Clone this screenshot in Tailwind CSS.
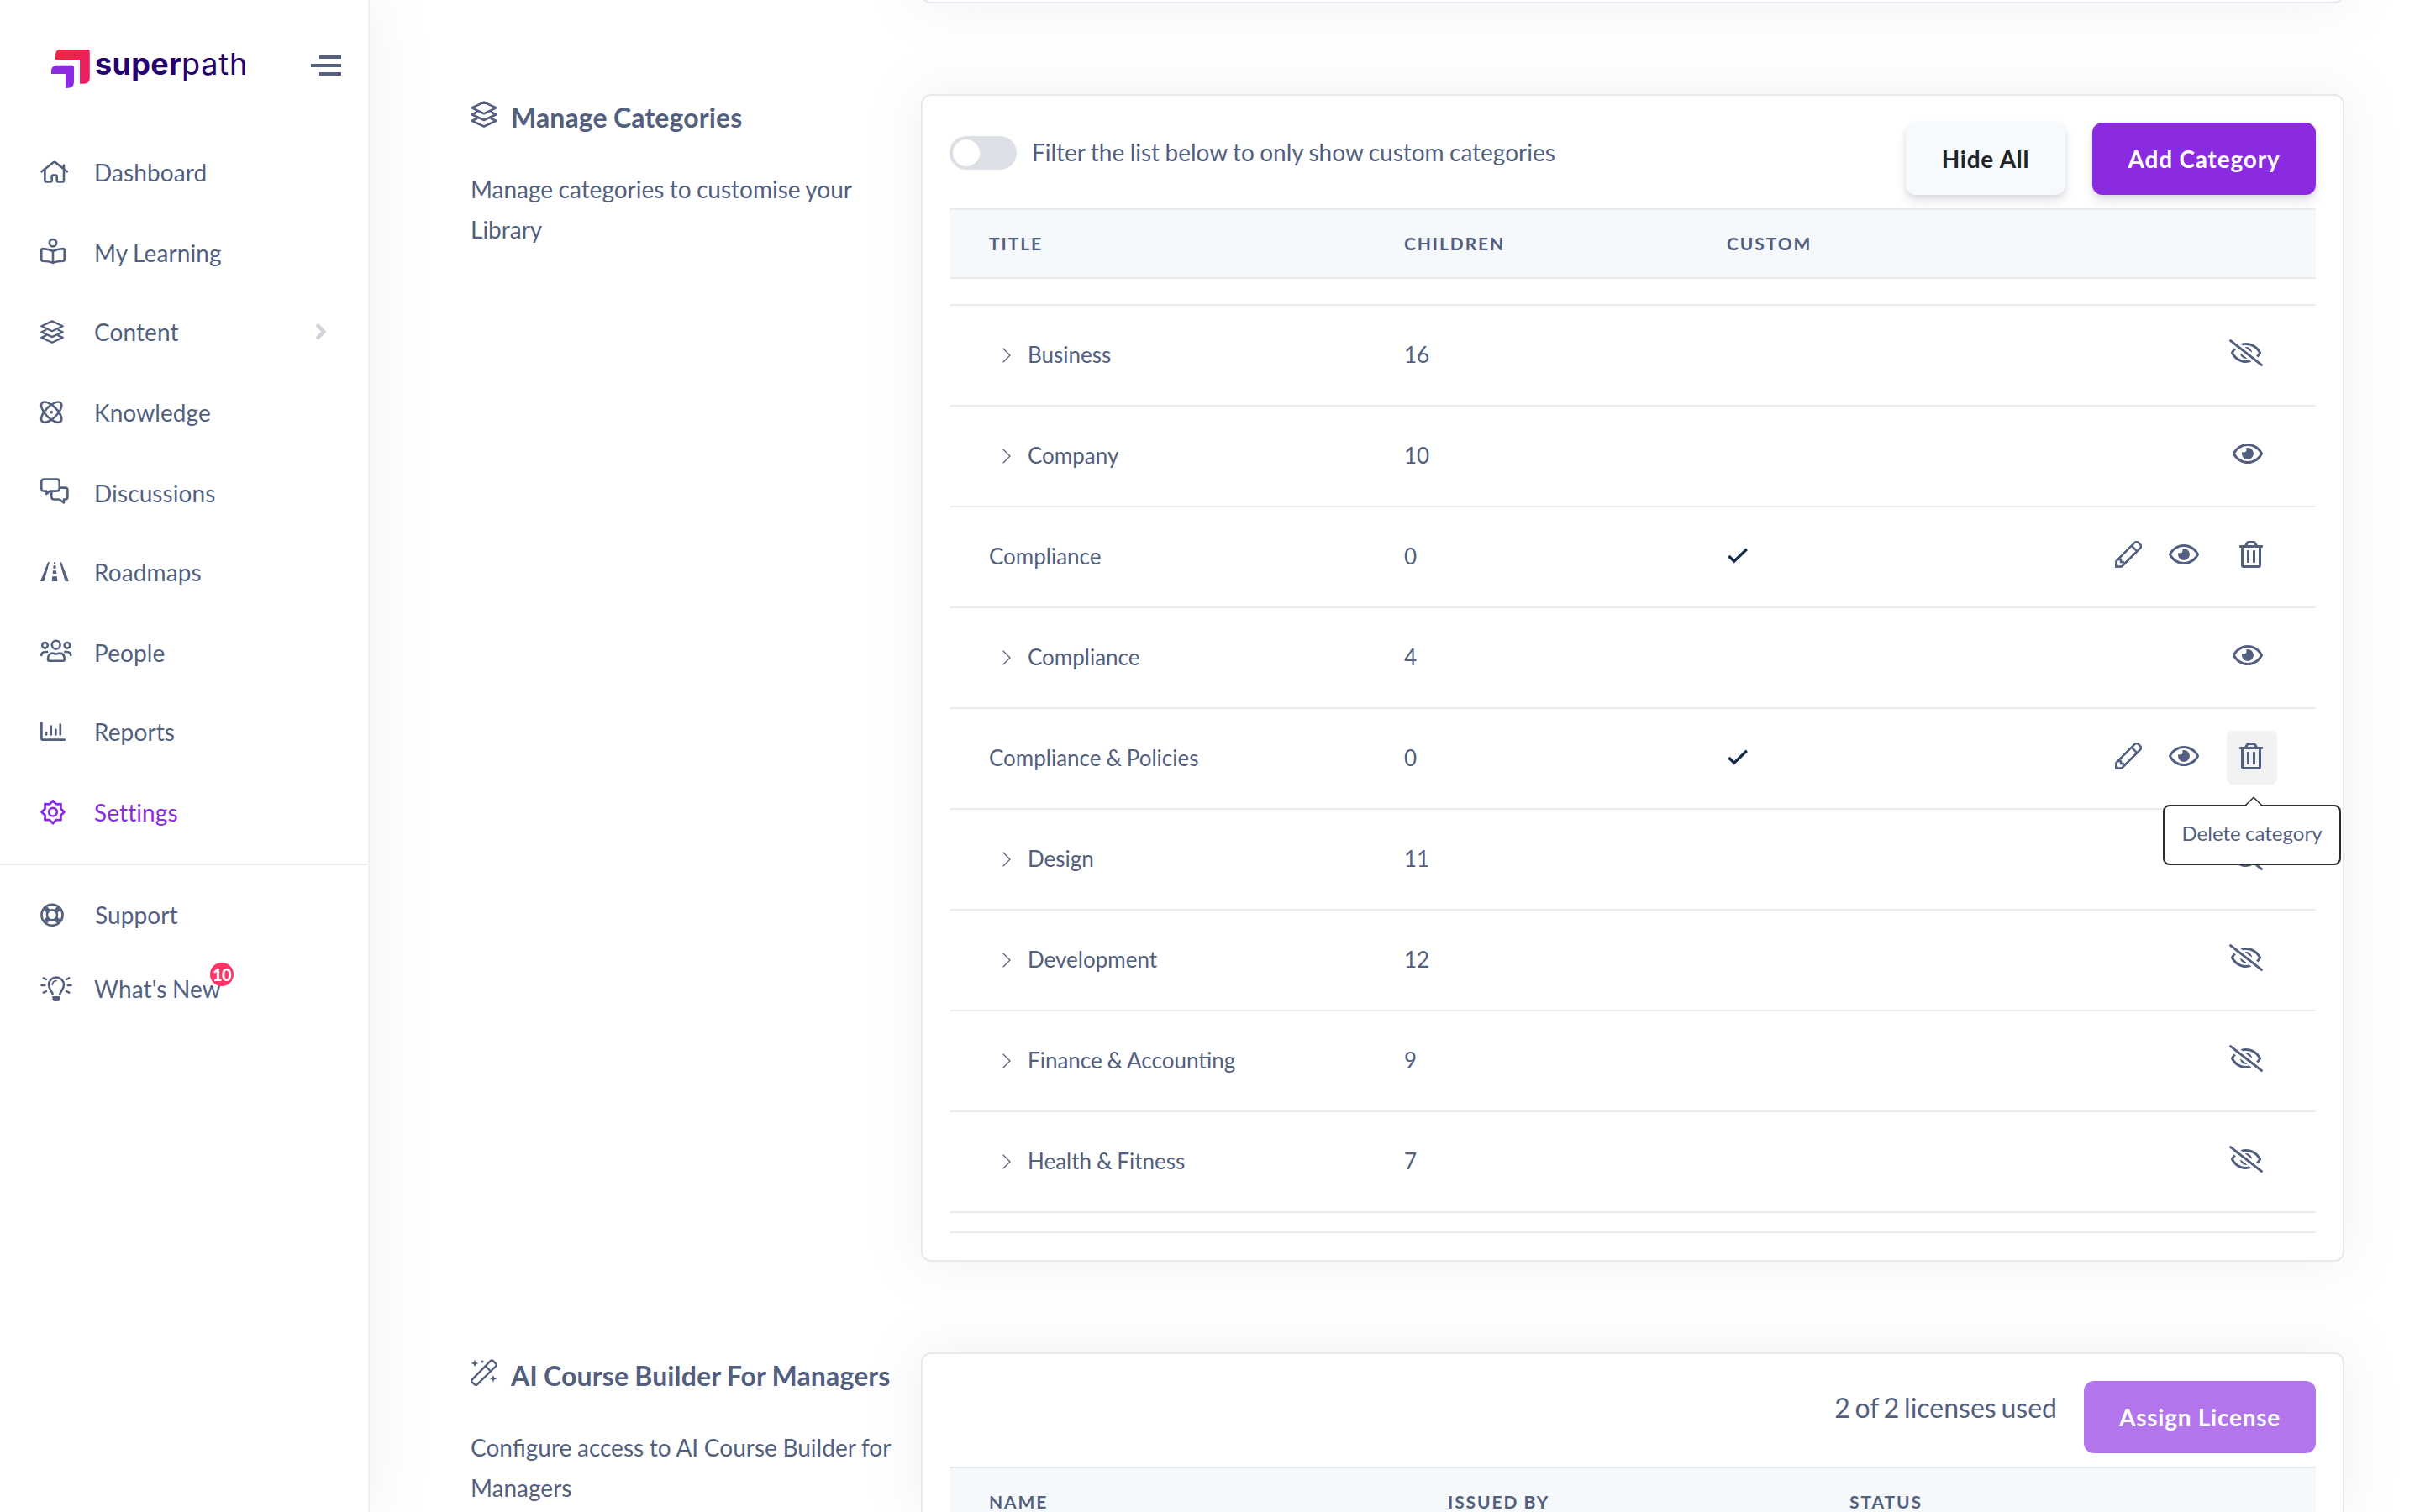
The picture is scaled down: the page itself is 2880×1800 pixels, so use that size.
<!DOCTYPE html>
<html lang="en">
<head>
<meta charset="utf-8">
<title>Superpath – Settings</title>
<script src="https://cdn.jsdelivr.net/npm/@tailwindcss/browser@4"></script>
</head>
<body class="overflow-hidden bg-white">
<svg class="hidden">
  <symbol id="home" viewBox="0 0 40 36"><g fill="none" stroke="currentColor" stroke-width="2.6" stroke-linecap="round" stroke-linejoin="round"><path d="M2.5 18.3 16.4 7.4q1.3-1 2.6 0L32.9 18.3M6.4 16v13q0 1.4 1.4 1.4h5.5q1.4 0 1.4-1.4v-5q0-1.4 1.4-1.4h3.2q1.4 0 1.4 1.4v5q0 1.4 1.4 1.4h5.5q1.4 0 1.4-1.4V10.7"/></g></symbol>
  <symbol id="reader" viewBox="0 0 40 36"><g fill="none" stroke="currentColor" stroke-width="2.6" stroke-linejoin="round"><circle cx="16" cy="7.2" r="4.2"/><path d="M16 17C12 15 8 14.3 4 14.1q-1.7 0-1.7 1.6V27q0 1.6 1.7 1.7 7.5.2 12 2.2 4.5-2 12-2.2 1.7-.1 1.7-1.7V15.700q0-1.600-1.700-1.600C24 14.300 20 15 16 17zM16 17v13.800"/></g></symbol>
  <symbol id="layers" viewBox="1 5 28 28"><g fill="none" stroke="currentColor" stroke-width="2.3" stroke-linejoin="round" stroke-linecap="round"><path d="M15 6.400 27.700 12.300 15 18.300 2.300 12.300zM7.300 17 2.300 19.200 15 25.100 27.700 19.200 22.700 17M7.300 23.600 2.300 25.900 15 31.700 27.700 25.900 22.700 23.600"/></g></symbol>
  <symbol id="atom" viewBox="0 0 40 36"><g fill="none" stroke="currentColor" stroke-width="2.600"><ellipse cx="14.200" cy="18.700" rx="15.600" ry="7" transform="rotate(45 14.200 18.700)"/><ellipse cx="14.200" cy="18.700" rx="15.600" ry="7" transform="rotate(-45 14.200 18.700)"/></g><circle cx="14.200" cy="18.700" r="1.900" fill="currentColor"/></symbol>
  <symbol id="comments" viewBox="0 0 40 36"><g fill="none" stroke="currentColor" stroke-width="2.600" stroke-linejoin="round"><path d="M5.300 2.600h15.400q3 0 3 3v8q0 3-3 3h-8.200L8.300 20v-3.400h-3q-3 0-3-3v-8q0-3 3-3zM24 12.600h6.400q3 0 3 3v7.900q0 3-3 3h-1.400v3.900l-5.500-3.900h-6.200q-3 0-3-3V17"/></g></symbol>
  <symbol id="road" viewBox="0 0 40 36"><path fill="currentColor" d="M10 7.300h1.900L5.500 30H1zM26 7.300h-1.900L30.500 30H35zM17 7.300h2v2h-2zM16.600 11.300h2.800l.3 3.400h-3.400zM16 17.300h4l.4 3.800h-4.800zM15.200 24.200h5.600l.6 5.800h-6.800z"/></symbol>
  <symbol id="people" viewBox="0 0 40 36"><g fill="none" stroke="currentColor" stroke-width="2.600" stroke-linecap="round"><circle cx="19.700" cy="9.700" r="4.900"/><circle cx="6.500" cy="10.300" r="3.300"/><circle cx="33" cy="10.300" r="3.300"/><path d="M10 26.500c0-4.500 2.500-6.900 5.500-6.900 2 0 2.300.9 4.300.9s2.300-.9 4.300-.9c3.300 0 5.600 2.400 5.600 6.900v.5q0 1.700-1.700 1.700H11.700Q10 28.700 10 27zM9.200 18H7q-4.600.3-4.700 4M30.300 18h2.200q4.600.3 4.700 4"/></g></symbol>
  <symbol id="chart" viewBox="0 0 40 36"><path fill="none" stroke="currentColor" stroke-width="2.700" stroke-linecap="round" d="M2.400 8.600v18.700q0 1.400 1.400 1.400h25.900M8 20.300v2.200M13.700 12.500v10M19.300 16.500v6M24.800 10.700v11.800"/></symbol>
  <symbol id="gear" viewBox="0 0 40 36"><g fill="none" stroke="currentColor" stroke-width="2.700" stroke-linejoin="round"><path d="M16 5.200 19.900 9.300 25.500 9.200 25.400 14.800 29.500 18.700 25.400 22.600 25.500 28.200 19.900 28.100 16 32.200 12.100 28.100 6.500 28.200 6.600 22.600 2.500 18.700 6.600 14.800 6.500 9.200 12.100 9.300z"/><circle cx="16" cy="18.700" r="4.800"/></g></symbol>
  <symbol id="buoy" viewBox="0 0 40 36"><g fill="none" stroke="currentColor"><circle cx="15" cy="19.300" r="12.500" stroke-width="2.700"/><circle cx="15" cy="19.300" r="6" stroke-width="2.500"/><path stroke-width="5.500" d="m7 11.300 4 4M23 11.300l-4 4M7 27.300l4-4M23 27.300l-4-4"/></g></symbol>
  <symbol id="bulb" viewBox="0 0 40 36"><g fill="none" stroke="currentColor" stroke-width="2.500" stroke-linecap="round"><path d="M15.700 25.300c-1-3.600-4.700-5.600-4.700-10.800a9 9 0 0 1 18 0c0 5.200-3.700 7.200-4.700 10.800M2.500 15h3.800M33.700 15h3.800M4.800 6.300 8 8M35.200 6.300 32 8M4.800 23.700 8 22M35.200 23.700 32 22"/><path stroke-width="1.800" d="M15.300 14.200a5 5 0 0 1 4.600-4.600"/></g><path fill="currentColor" d="M15.300 28h9.400v2.500q-.3 3.500-3.200 3.500h-3q-2.900 0-3.200-3.500z"/></symbol>
  <symbol id="wand" viewBox="0 0 32 32"><g fill="none" stroke="currentColor" stroke-width="2.400" stroke-linejoin="round"><path d="M1.900 24.400 23.700 2.200q1.600-1.600 3.200 0l3.100 3.100q1.600 1.600 0 3.200L8 30.100q-1.600 1.400-3.200 0l-2.900-2.500q-1.400-1.600 0-3.200zM18 8.500l5.500 5.500"/></g><path fill="currentColor" d="M5 .6l1.200 3.200L9.400 5 6.200 6.200 5 9.400 3.800 6.200.6 5l3.200-1.200zM14 .4l.7 1.900 1.900.7-1.900.7L14 5.600l-.7-1.900-1.900-.7 1.900-.7zM27 18.900l1.200 3.200 3.200 1.200-3.200 1.200L27 27.700l-1.200-3.200-3.200-1.200 3.200-1.200z"/></symbol>
  <symbol id="eye" viewBox="0 0 576 512"><path fill="currentColor" d="M288 144a110.940 110.940 0 0 0-31.240 5 55.400 55.400 0 0 1 7.240 27 56 56 0 0 1-56 56 55.400 55.400 0 0 1-27-7.240A111.710 111.710 0 1 0 288 144zm284.520 97.400C518.290 135.590 410.930 64 288 64S57.680 135.640 3.480 241.410a32.350 32.350 0 0 0 0 29.190C57.710 376.410 165.070 448 288 448s230.320-71.640 284.520-177.410a32.350 32.350 0 0 0 0-29.190zM288 400c-98.650 0-189.090-55-237.930-144C98.910 167 189.340 112 288 112s189.090 55 237.930 144C477.100 345 386.660 400 288 400z"/></symbol>
  <symbol id="eye-off" viewBox="0 0 640 512"><path fill="currentColor" d="M634 471L36 3.510A16 16 0 0 0 13.510 6l-10 12.490A16 16 0 0 0 6 41l598 467.490a16 16 0 0 0 22.490-2.490l10-12.490A16 16 0 0 0 634 471zM296.790 146.470l134.790 105.380C429.360 191.910 380.480 144 320 144a112.260 112.260 0 0 0-23.210 2.470zm46.420 219.070L208.420 260.160C210.650 320.090 259.530 368 320 368a113 113 0 0 0 23.210-2.460zM320 112c98.650 0 189.090 55 237.930 144a285.530 285.530 0 0 1-44 60.200l37.740 29.500a333.700 333.700 0 0 0 52.900-75.110 32.350 32.350 0 0 0 0-29.190C550.290 135.590 442.930 64 320 64c-36.700 0-71.710 7-104.630 18.810l46.410 36.290c18.940-4.300 38.340-7.100 58.220-7.100zm0 288c-98.650 0-189.080-55-237.930-144a285.470 285.470 0 0 1 44.050-60.190l-37.740-29.500a333.600 333.600 0 0 0-52.890 75.100 32.350 32.350 0 0 0 0 29.190C89.720 376.410 197.080 448 320 448c36.700 0 71.710-7.050 104.630-18.810l-46.410-36.280C359.280 397.200 339.890 400 320 400z"/></symbol>
  <symbol id="trash" viewBox="0 0 448 512"><path fill="currentColor" d="M268 416h24a12 12 0 0 0 12-12V188a12 12 0 0 0-12-12h-24a12 12 0 0 0-12 12v216a12 12 0 0 0 12 12zM432 80h-82.410l-34-56.700A48 48 0 0 0 274.410 0H173.590a48 48 0 0 0-41.160 23.300L98.410 80H16A16 16 0 0 0 0 96v16a16 16 0 0 0 16 16h16v336a48 48 0 0 0 48 48h288a48 48 0 0 0 48-48V128h16a16 16 0 0 0 16-16V96a16 16 0 0 0-16-16zM171.840 50.910A6 6 0 0 1 177 48h94a6 6 0 0 1 5.150 2.910L293.610 80H154.390zM368 464H80V128h288zm-212-48h24a12 12 0 0 0 12-12V188a12 12 0 0 0-12-12h-24a12 12 0 0 0-12 12v216a12 12 0 0 0 12 12z"/></symbol>
  <symbol id="pencil" viewBox="0 0 512 512"><path fill="currentColor" stroke="currentColor" stroke-width="12" d="M493.255 56.236l-37.490-37.490c-24.993-24.993-65.515-24.994-90.510 0L12.838 371.162.151 485.346c-1.698 15.286 11.220 28.203 26.504 26.504l114.184-12.687 352.417-352.417c24.992-24.994 24.992-65.517-.001-90.510zm-95.196 140.450L174 420.745V386h-48v-48H91.255l224.059-224.059 82.745 82.745zM126.147 468.598l-58.995 6.555-30.305-30.305 6.555-58.995L63.255 366H98v48h48v34.745l-19.853 19.853zm344.480-344.480l-49.941 49.941-82.745-82.745 49.941-49.941c12.505-12.505 32.748-12.507 45.255 0l37.490 37.490c12.506 12.506 12.507 32.747 0 45.255z"/></symbol>
  <symbol id="check" viewBox="0 0 24 20"><path fill="none" stroke="currentColor" stroke-width="3.400" d="M1.400 10 7.800 16.200 22.800 1.800"/></symbol>
  <symbol id="caret" viewBox="0 0 10 18"><path fill="none" stroke="currentColor" stroke-width="1.300" d="M.7.700 9 9 .7 17.300"/></symbol>
</svg>

<div class="flex h-[1800px] w-[2880px] overflow-hidden font-['Lato',sans-serif] text-[28px] text-[#525f7f] [word-spacing:-0.8px]">
  <!-- Sidebar -->
  <aside class="relative z-10 flex h-full w-[440px] shrink-0 flex-col border-r-2 border-[#f0f0f2] bg-white shadow-[0_0_64px_rgba(136,152,170,0.15)]">
    <header class="flex h-[186px] items-start justify-between pt-[58px] pr-8 pl-[60px]">
      <a class="flex items-start">
        <svg class="h-12 w-[50px]" viewBox="0 0 50 48">
          <defs><linearGradient id="red" x1="0" y1="0" x2="1" y2="1"><stop offset="0" stop-color="#f0283f"/><stop offset="1" stop-color="#ee1a6c"/></linearGradient></defs>
          <path fill="url(#red)" d="M6 13V7q0-6 6-6h32.500q2.300 0 2.300 2.300V35q-.3 6.700-7 6.700H35V13z"/>
          <path fill="#8b2be2" d="M1 30v-3.500q.3-6.800 7-6.800h17.500q2.500 0 2.500 2.500V40q-.3 6.700-6.500 6.700H18V30z"/>
        </svg>
        <span class="ml-[3px] font-['Inter',sans-serif] text-[36px] leading-[36px] text-[#25006f]"><b class="font-bold tracking-[0.3px]">super</b><span class="font-normal tracking-[0.9px]">path</span></span>
      </a>
      <svg class="mt-2 h-6 w-9" viewBox="0 0 36 24"><path fill="#525f7f" d="M10 0h26v4H10zM0 10h36v4H0zM10 20h26v4H10z"/></svg>
    </header>
    <nav class="flex flex-col pl-[47px] leading-[38px] tracking-[0.1px]">
      <a class="flex h-24"><svg class="mr-[25px] h-9 w-10"><use href="#home"/></svg>Dashboard</a>
      <a class="flex h-[94px]"><svg class="mr-[25px] h-9 w-10"><use href="#reader"/></svg>My Learning</a>
      <a class="flex h-24"><svg class="mt-[5px] mr-9 ml-px h-7 w-7"><use href="#layers"/></svg>Content<svg class="mt-[9px] mr-[49px] ml-auto h-5 w-[14px]" viewBox="0 0 14 20"><path fill="none" stroke="#ced4da" stroke-width="4.600" stroke-linecap="round" stroke-linejoin="round" d="m3.500 2.800 7 7-7 7"/></svg></a>
      <a class="flex h-24"><svg class="mr-[25px] h-9 w-10"><use href="#atom"/></svg>Knowledge</a>
      <a class="flex h-[94px]"><svg class="mr-[25px] h-9 w-10"><use href="#comments"/></svg>Discussions</a>
      <a class="flex h-24"><svg class="mr-[25px] h-9 w-10"><use href="#road"/></svg>Roadmaps</a>
      <a class="flex h-[94px]"><svg class="mr-[25px] h-9 w-10"><use href="#people"/></svg>People</a>
      <a class="flex h-24"><svg class="mr-[25px] h-9 w-10"><use href="#chart"/></svg>Reports</a>
      <a class="flex h-20 text-[#8a2be2] [font-variant-ligatures:none]"><svg class="mr-[25px] h-9 w-10"><use href="#gear"/></svg>Settings</a>
    </nav>
    <nav class="flex flex-col border-t-2 border-[#e9ecef] pt-10 pl-[47px] leading-[38px] tracking-[0.1px]">
      <a class="flex h-[88px]"><svg class="mr-[26px] h-9 w-10"><use href="#buoy"/></svg>Support</a>
      <a class="flex h-24"><svg class="mr-[25px] h-9 w-10"><use href="#bulb"/></svg><span class="relative">What's New<span class="absolute -top-3 left-[138px] flex size-7 items-center justify-center rounded-full bg-[#fe3366] text-[20px] leading-none font-black tracking-[-0.5px] text-white">10</span></span></a>
    </nav>
  </aside>

  <main class="flex flex-col gap-[108px] pl-[120px]">
    <section class="flex pl-[536px]"><div class="-mt-[196px] h-[200px] w-[1694px] rounded-xl border-2 border-[#e6e8ee] bg-white shadow-[0_0_64px_rgba(136,152,170,0.15)]"></div></section>

    <section class="flex">
      <div class="w-[536px] shrink-0 pt-2">
        <h2 class="flex h-10 text-[32px] leading-[40px] font-bold tracking-[0.13px] whitespace-nowrap"><svg class="mr-4 size-8"><use href="#layers"/></svg>Manage Categories</h2>
        <p class="mt-[41px] w-[510px] leading-[48px]">Manage categories to customise your Library</p>
      </div>
      <div class="w-[1694px] rounded-xl border-2 border-[#e6e8ee] bg-white p-8 shadow-[0_0_64px_rgba(136,152,170,0.15)]">
        <div class="flex items-start">
          <span class="mt-4 flex h-10 w-20 rounded-full bg-[#dcdfe6] p-1"><span class="size-8 rounded-full bg-white"></span></span>
          <span class="mt-4 ml-[18px] leading-[38px]">Filter the list below to only show custom categories</span>
          <button class="ml-auto h-[86px] w-[190px] rounded-xl bg-[#f7fafc] font-bold tracking-[0.75px] text-[#212529] shadow-[0_8px_12px_rgba(50,50,93,0.11),0_2px_6px_rgba(0,0,0,0.08)]">Hide All</button>
          <button class="ml-8 h-[86px] w-[266px] rounded-xl bg-[#8a2be2] font-bold tracking-[0.8px] text-white shadow-[0_8px_12px_rgba(50,50,93,0.11),0_2px_6px_rgba(0,0,0,0.08)]">Add Category</button>
        </div>
        <div class="mt-4 grid h-[84px] grid-cols-[494px_384px_1fr] items-center border-y-2 border-[#e9ecef] bg-[#f6f9fc] pl-[47px] text-[21px] font-bold tracking-[1.9px]">
          <span>TITLE</span><span>CHILDREN</span><span>CUSTOM</span>
        </div>
        <div class="h-[30px]"></div>
        <div class="border-b-2 border-[#e9ecf3] text-[26px]">
          <div class="grid h-[120px] grid-cols-[494px_384px_1fr_auto] items-center border-t-2 border-[#e9ecf3] pr-[63px] pb-1.5 pl-[47px]">
            <span class="flex items-center pt-[5px]"><svg class="mr-5 ml-4 h-[18px] w-2.5"><use href="#caret"/></svg>Business</span><span class="pt-[5px]">16</span><span></span>
            <svg class="h-8 w-10"><use href="#eye-off"/></svg>
          </div>
          <div class="grid h-[120px] grid-cols-[494px_384px_1fr_auto] items-center border-t-2 border-[#e9ecf3] pr-[63px] pb-1.5 pl-[47px]">
            <span class="flex items-center pt-[5px]"><svg class="mr-5 ml-4 h-[18px] w-2.5"><use href="#caret"/></svg>Company</span><span class="pt-[5px]">10</span><span></span>
            <svg class="h-8 w-9"><use href="#eye"/></svg>
          </div>
          <div class="grid h-[120px] grid-cols-[494px_384px_1fr_auto] items-center border-t-2 border-[#e9ecf3] pr-[63px] pb-1.5 pl-[47px]">
            <span class="pt-[5px]">Compliance</span><span class="pt-[5px]">0</span><svg class="mt-1 ml-px h-5 w-6 text-[#172b4d]"><use href="#check"/></svg>
            <span class="flex items-center"><svg class="mr-8 size-8"><use href="#pencil"/></svg><svg class="mr-12 h-8 w-9"><use href="#eye"/></svg><svg class="h-8 w-7"><use href="#trash"/></svg></span>
          </div>
          <div class="grid h-[120px] grid-cols-[494px_384px_1fr_auto] items-center border-t-2 border-[#e9ecf3] pr-[63px] pb-1.5 pl-[47px]">
            <span class="flex items-center pt-[5px]"><svg class="mr-5 ml-4 h-[18px] w-2.5"><use href="#caret"/></svg>Compliance</span><span class="pt-[5px]">4</span><span></span>
            <svg class="h-8 w-9"><use href="#eye"/></svg>
          </div>
          <div class="grid h-[120px] grid-cols-[494px_384px_1fr_auto] items-center border-t-2 border-[#e9ecf3] pr-[63px] pb-1.5 pl-[47px]">
            <span class="pt-[5px]">Compliance &amp; Policies</span><span class="pt-[5px]">0</span><svg class="mt-1 ml-px h-5 w-6 text-[#172b4d]"><use href="#check"/></svg>
            <span class="flex items-center"><svg class="mr-8 size-8"><use href="#pencil"/></svg><svg class="mr-12 h-8 w-9"><use href="#eye"/></svg>
              <span class="relative -mt-[14px] -mr-[17px] -mb-[18px] -ml-[15px] rounded-lg bg-[#f2f2f2] pt-[14px] pr-[17px] pb-[18px] pl-[15px]">
                <svg class="h-8 w-7"><use href="#trash"/></svg>
                <span class="absolute top-[88px] -left-[76px] z-10 flex h-[72px] w-[212px] items-center justify-center rounded-lg border-2 border-[#2b2b2b] bg-white pb-1 text-2xl whitespace-nowrap">Delete category
                  <svg class="absolute -top-3 left-[95px] h-3 w-[22px]" viewBox="0 0 22 12"><path fill="#fff" d="M1 12 11 2l10 10z"/><path fill="none" stroke="#2b2b2b" stroke-width="1.500" d="M.7 11.200 11 1.200 21.300 11.200"/></svg>
                </span>
              </span>
            </span>
          </div>
          <div class="grid h-[120px] grid-cols-[494px_384px_1fr_auto] items-center border-t-2 border-[#e9ecf3] pr-[63px] pb-1.5 pl-[47px]">
            <span class="flex items-center pt-[5px]"><svg class="mr-5 ml-4 h-[18px] w-2.5"><use href="#caret"/></svg>Design</span><span class="pt-[5px]">11</span><span></span>
            <svg class="h-8 w-10"><use href="#eye-off"/></svg>
          </div>
          <div class="grid h-[120px] grid-cols-[494px_384px_1fr_auto] items-center border-t-2 border-[#e9ecf3] pr-[63px] pb-1.5 pl-[47px]">
            <span class="flex items-center pt-[5px]"><svg class="mr-5 ml-4 h-[18px] w-2.5"><use href="#caret"/></svg>Development</span><span class="pt-[5px]">12</span><span></span>
            <svg class="h-8 w-10"><use href="#eye-off"/></svg>
          </div>
          <div class="grid h-[120px] grid-cols-[494px_384px_1fr_auto] items-center border-t-2 border-[#e9ecf3] pr-[63px] pb-1.5 pl-[47px]">
            <span class="flex items-center pt-[5px]"><svg class="mr-5 ml-4 h-[18px] w-2.5"><use href="#caret"/></svg>Finance &amp; Accounting</span><span class="pt-[5px]">9</span><span></span>
            <svg class="h-8 w-10"><use href="#eye-off"/></svg>
          </div>
          <div class="grid h-[120px] grid-cols-[494px_384px_1fr_auto] items-center border-t-2 border-[#e9ecf3] pr-[63px] pb-1.5 pl-[47px]">
            <span class="flex items-center pt-[5px]"><svg class="mr-5 ml-4 h-[18px] w-2.5"><use href="#caret"/></svg>Health &amp; Fitness</span><span class="pt-[5px]">7</span><span></span>
            <svg class="h-8 w-10"><use href="#eye-off"/></svg>
          </div>
        </div>
        <div class="h-6 border-b-2 border-[#e9ecf3]"></div>
      </div>
    </section>

    <section class="flex h-[190px] overflow-visible">
      <div class="w-[536px] shrink-0 pt-2">
        <h2 class="flex h-10 text-[32px] leading-[40px] font-bold tracking-[0.13px] whitespace-nowrap"><svg class="mr-4 size-8"><use href="#wand"/></svg>AI Course Builder For Managers</h2>
        <p class="mt-[41px] w-[510px] leading-[48px] [word-spacing:-0.5px]">Configure access to AI Course Builder for Managers</p>
      </div>
      <div class="h-[190px] w-[1694px] rounded-t-xl border-2 border-b-0 border-[#e6e8ee] bg-white p-8 pb-0 shadow-[0_0_64px_rgba(136,152,170,0.15)]">
        <div class="flex items-start justify-end">
          <span class="mt-3 mr-8 text-[32px] leading-[40px] [word-spacing:-2.4px]">2 of 2 licenses used</span>
          <button class="h-[86px] w-[276px] rounded-xl bg-[#b375ec] font-bold tracking-[0.75px] text-white">Assign License</button>
        </div>
        <div class="mt-4 grid h-[84px] grid-cols-[546px_478px_1fr] items-center border-t-2 border-[#e9ecef] bg-[#f6f9fc] pb-0.5 pl-[47px] text-[21px] font-bold tracking-[1.9px]">
          <span>NAME</span><span>ISSUED BY</span><span>STATUS</span>
        </div>
      </div>
    </section>
  </main>
</div>
</body>
</html>
